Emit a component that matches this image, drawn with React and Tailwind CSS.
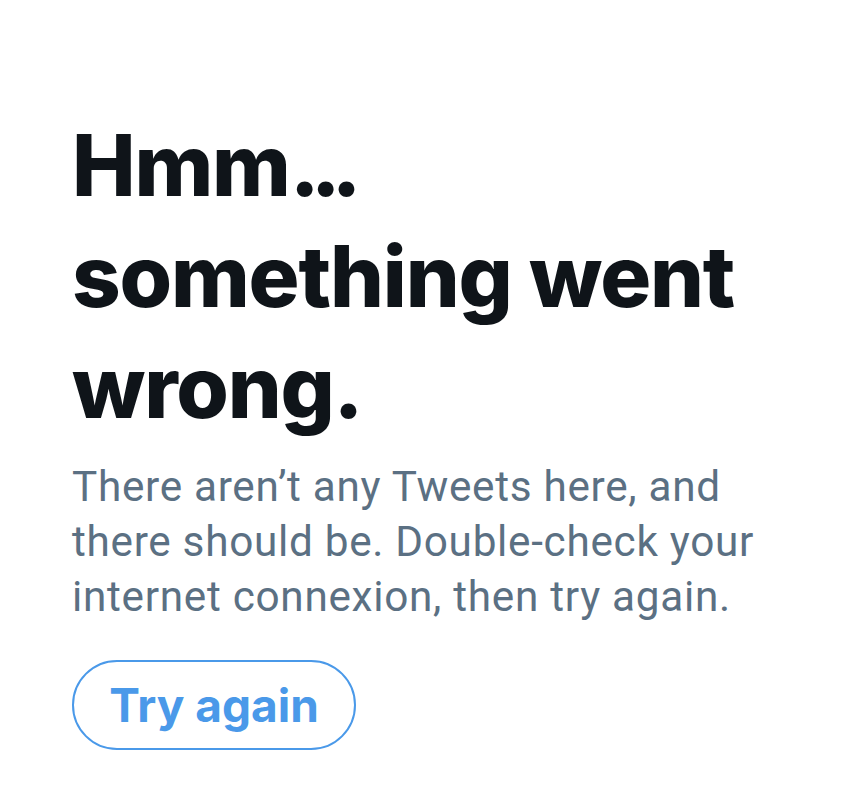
export default function App() {
    return (
        <div className="w-[863px] h-[796px] bg-white pl-[72px] pt-[110px] font-['Inter',sans-serif]">
            <h1 className="text-[85px] leading-[111px] font-extrabold tracking-[-1.2px] text-[#0f1419]">
                Hmm<span className="tracking-[-9px]">...</span>
                <br />
                something went
                <br />
                wrong.
            </h1>
            <p className="mt-[16px] text-[42.3px] leading-[55px] tracking-[0.7px] text-[#5b7083] font-['Roboto',sans-serif] whitespace-nowrap">
                There aren’t any Tweets here, and
                <br />
                there should be. Double-check your
                <br />
                internet connexion, then try again.
            </p>
            <button className="mt-[36px] w-[284px] h-[90px] rounded-full border-2 border-[#4a99e9] text-[#4a99e9] text-[46px] font-bold flex items-center justify-center">
                Try again
            </button>
        </div>
    );
}
